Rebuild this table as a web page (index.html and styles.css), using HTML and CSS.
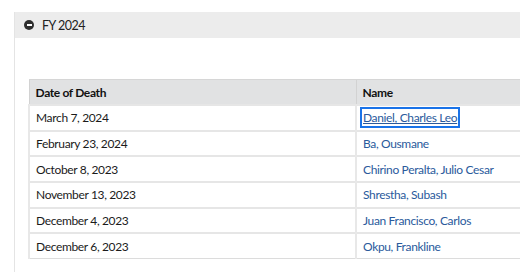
FILE: index.html
```html
<!DOCTYPE html>
<html>
<head>
<meta charset="utf-8">
<link rel="stylesheet" href="styles.css">
</head>
<body>
<div class="panel">
  <div class="panel-head">
    <span class="toggle"></span>
    <span class="title">FY 2024</span>
  </div>
  <div class="panel-body">
    <table class="deaths">
      <thead>
        <tr><th class="c1">Date of Death</th><th>Name</th></tr>
      </thead>
      <tbody>
        <tr><td>March 7, 2024</td><td><a class="focused" href="#">Daniel, Charles Leo</a></td></tr>
        <tr><td>February 23, 2024</td><td><a href="#">Ba, Ousmane</a></td></tr>
        <tr><td>October 8, 2023</td><td><a href="#">Chirino Peralta, Julio Cesar</a></td></tr>
        <tr><td>November 13, 2023</td><td><a href="#">Shrestha, Subash</a></td></tr>
        <tr><td>December 4, 2023</td><td><a href="#">Juan Francisco, Carlos</a></td></tr>
        <tr><td>December 6, 2023</td><td><a href="#">Okpu, Frankline</a></td></tr>
      </tbody>
    </table>
  </div>
</div>
</body>
</html>
```
FILE: styles.css
```css
html, body {
  margin: 0;
  padding: 0;
  background: #fff;
  overflow: hidden;
}
body {
  font-family: Lato, "Noto Sans", sans-serif;
  color: #1b1b1b;
  padding: 12px 0 0 14px;
  height: 260px;
}
.panel {
  width: 506px;
  border-left: 1px solid #e4e4e4;
  height: 260px;
  overflow: hidden;
}
.panel-head {
  background: #ececec;
  height: 26px;
  display: flex;
  align-items: center;
  padding-left: 9px;
  gap: 8px;
}
.toggle {
  width: 10px;
  height: 10px;
  border-radius: 50%;
  background: #2e2e2e;
  position: relative;
  display: inline-block;
}
.toggle::after {
  content: "";
  position: absolute;
  left: 2.5px;
  top: 4px;
  width: 5px;
  height: 2px;
  background: #fff;
}
.title {
  font-size: 12.5px;
  letter-spacing: -0.5px;
  color: #222;
}
.panel-body {
  padding: 41px 0 0 13px;
}
.deaths {
  border-collapse: collapse;
  width: 600px;
  font-size: 12px;
  letter-spacing: -0.35px;
  border: 1px solid #dcdcdc;
}
.deaths th {
  background: #e1e2e3;
  text-align: left;
  font-weight: bold;
  color: #111;
  height: 24px;
  padding: 0 6px;
  border-left: 1px solid #d2d2d2;
  border-top: 1px solid #d6d6d6;
}
.deaths th.c1 {
  width: 314px;
}
.deaths td {
  height: 23.7px;
  padding: 0 6px;
  border-top: 2px solid #e6e6e6;
  border-left: 2px solid #e8e8e8;
}
.deaths a {
  color: #2a5a9c;
  text-decoration: none;
}
.deaths a.focused {
  text-decoration: underline;
  outline: 2px solid #1a73e8;
  outline-offset: 1px;
  color: #2a5a9c;
}
```
